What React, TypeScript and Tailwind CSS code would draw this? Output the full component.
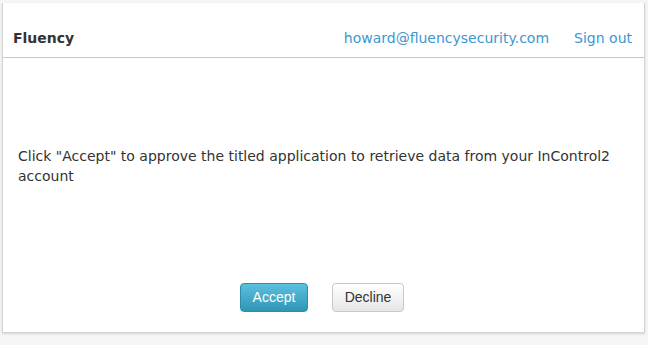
export default function App() {
  return (
    <div className="w-[648px] h-[345px] bg-[#f5f5f5] pt-[3px] pl-[2px] overflow-hidden">
      <div className="w-[643px] h-[330px] bg-white border-x border-b border-[#d4d4d4] shadow-[0_1px_2px_rgba(0,0,0,0.12)] flex flex-col">
        <header className="h-[55px] shrink-0 border-b border-[#c8c8c8] flex items-end pb-[8px] pl-[10px] pr-[12px] font-['DejaVu_Sans',sans-serif] text-[14px]">
          <span className="font-bold text-[#333]">Fluency</span>
          <a className="ml-auto text-[#3a98d0]" href="#">howard@fluencysecurity.com</a>
          <a className="ml-[25px] text-[#3a98d0]" href="#">Sign out</a>
        </header>
        <main className="flex-1 flex flex-col">
          <p className="mt-[88px] pl-[15px] pr-[10px] text-[14px] leading-[20px] text-[#333] font-['DejaVu_Sans',sans-serif]">
            Click "Accept" to approve the titled application to retrieve data from your InControl2 account
          </p>
          <div className="mt-auto mb-[20px] flex justify-center gap-[24px] pr-[3px] font-['Liberation_Sans',Arial,sans-serif] text-[14px]">
            <button className="w-[68px] h-[29px] rounded-[4px] border border-[#2f8cab] bg-gradient-to-b from-[#5bc0de] to-[#2f96b4] text-white">
              Accept
            </button>
            <button className="w-[72px] h-[29px] rounded-[4px] border border-[#c8c8c8] bg-gradient-to-b from-white to-[#e6e6e6] text-[#333]">
              Decline
            </button>
          </div>
        </main>
      </div>
    </div>
  );
}
